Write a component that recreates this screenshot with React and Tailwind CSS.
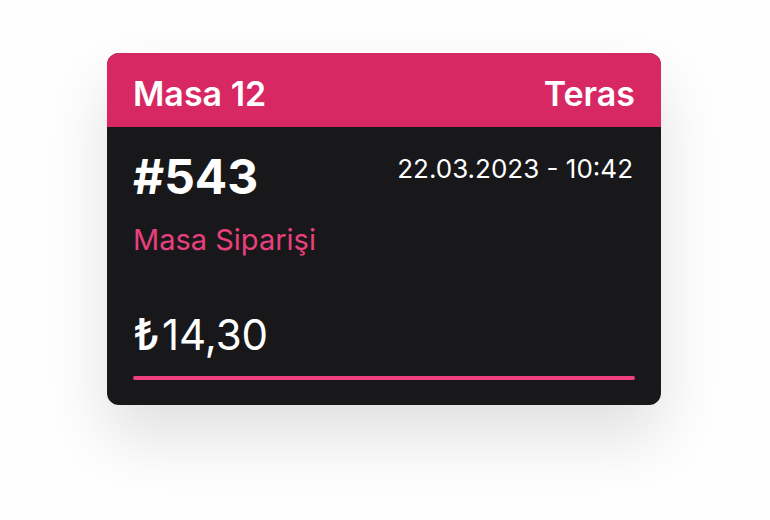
import React from "react";

const order = {
  table: "Masa 12",
  area: "Teras",
  number: "#543",
  date: "22.03.2023 - 10:42",
  type: "Masa Siparişi",
  currency: "₺",
  total: "14,30",
};

const OrderCard = ({ order }) => {
  return (
    <div className="w-full max-w-[554px] rounded-xl overflow-hidden bg-[#18181a] text-white shadow-[0_32px_64px_rgba(0,0,0,0.12)]">
      <div className="flex items-center justify-between bg-[#d82864] px-[26px] h-[74px] pt-2">
        <h2 className="text-[34px] leading-10 font-semibold">{order.table}</h2>
        <span className="text-[34px] leading-10 font-semibold">
          {order.area}
        </span>
      </div>

      <div className="px-[26px] pt-5 pb-[25px]">
        <div className="flex items-start justify-between">
          <h1 className="text-[48px] leading-[60px] font-bold">
            {order.number}
          </h1>
          <span className="text-[26px] leading-[44px] pr-0.5">
            {order.date}
          </span>
        </div>
        <p className="mt-[13px] text-[29px] leading-10 text-[#e8407c]">
          {order.type}
        </p>
        <p className="mt-[46px] flex items-baseline gap-0.5 text-[42px] leading-[56px]">
          <span className="text-[44px] leading-[56px] font-medium">
            {order.currency}
          </span>
          <span>{order.total}</span>
        </p>
        <div className="mt-[13px] h-1 rounded-full bg-[#f03f7e]" />
      </div>
    </div>
  );
};

const App = () => {
  return (
    <div className="min-h-screen bg-[#fefefe] pl-4 pr-[18px] pt-[53px] flex justify-center items-start font-['Inter',sans-serif]">
      <OrderCard order={order} />
    </div>
  );
};

export default App;
